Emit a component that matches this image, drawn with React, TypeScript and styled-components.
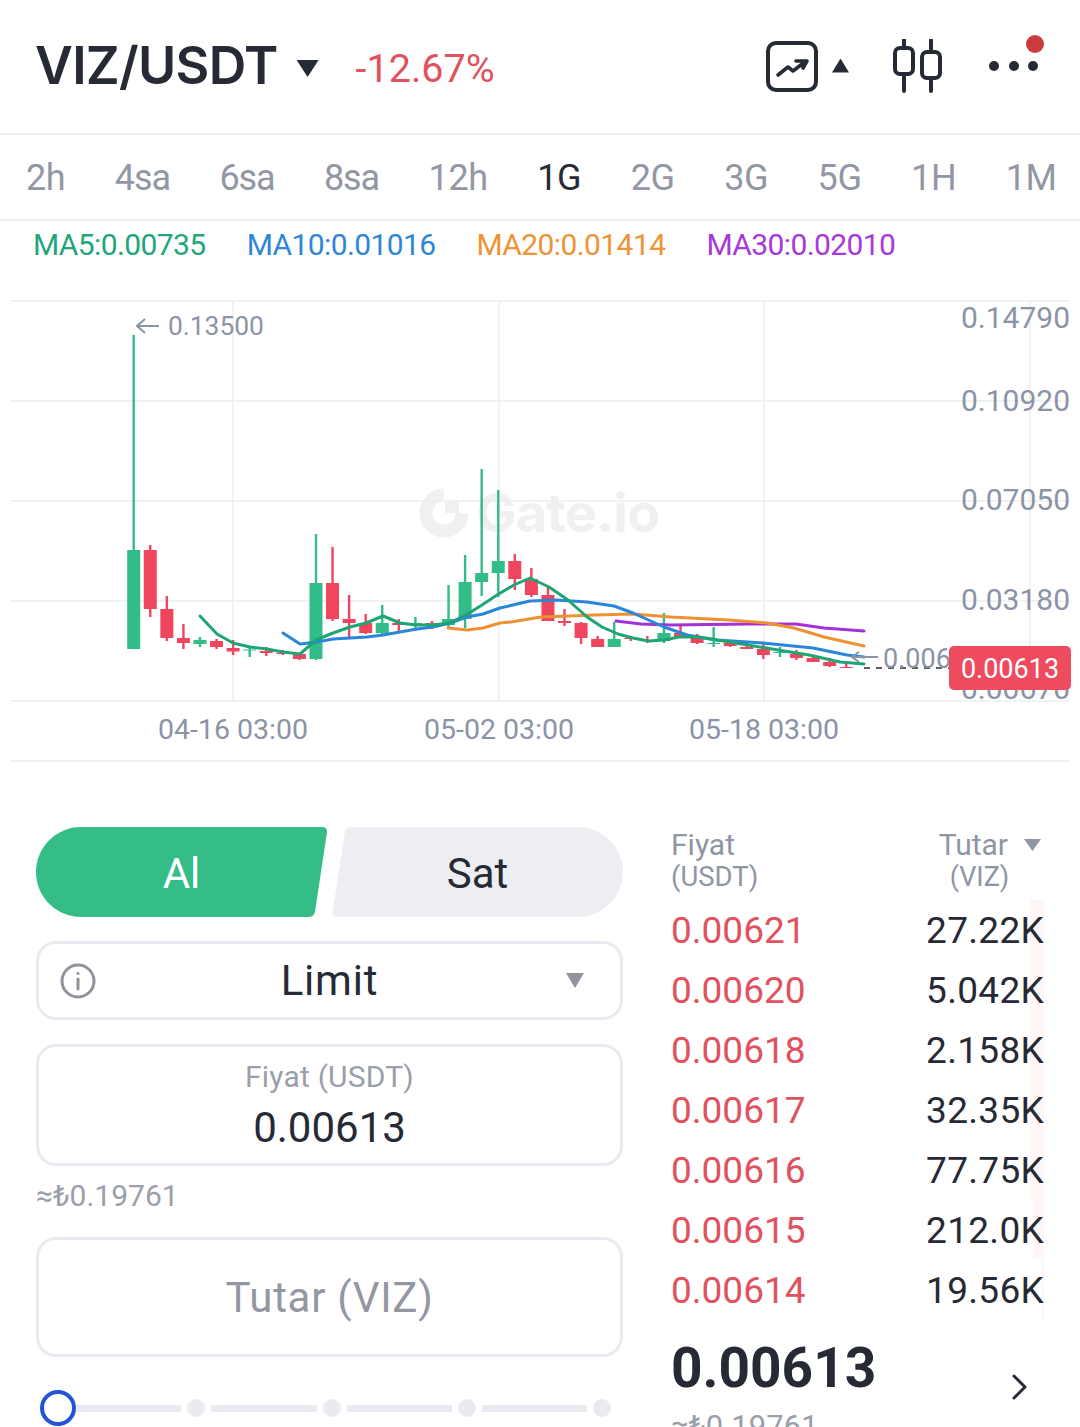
import styled, { createGlobalStyle } from "styled-components";

const GlobalStyle = createGlobalStyle`
  html, body {
    margin: 0;
    padding: 0;
    background: #fff;
    height: 1427px;
    overflow: hidden;
  }
  * {
    box-sizing: border-box;
  }
  #root {
    font-family: Roboto, "Liberation Sans", sans-serif;
    color: #262a35;
  }
`;

const Page = styled.div`
  width: 1080px;
  height: 1427px;
  overflow: hidden;
  position: relative;
`;

const Header = styled.header`
  height: 135px;
  display: flex;
  align-items: center;
  padding: 0 35px 2px 35px;
  border-bottom: 2px solid #eef0f3;
`;

const Pair = styled.h1`
  margin: 0;
  font-family: Inter, sans-serif;
  font-size: 52px;
  line-height: 60px;
  font-weight: 600;
  letter-spacing: -0.7px;
`;

const Caret = styled.span<{ $up?: boolean; $color?: string; $w: number; $h: number }>`
  display: block;
  flex: none;
  width: ${(p) => p.$w}px;
  height: ${(p) => p.$h}px;
  background: ${(p) => p.$color ?? "#262a35"};
  clip-path: ${(p) => (p.$up ? "polygon(50% 0, 100% 100%, 0 100%)" : "polygon(0 0, 100% 0, 50% 100%)")};
`;

const PairCaret = styled(Caret)`
  margin: 6px 0 0 19px;
`;

const Change = styled.span`
  margin: 6px 0 0 37px;
  font-size: 39.5px;
  color: #e0525f;
`;

const HeaderIcons = styled.div`
  margin-left: auto;
  display: flex;
  align-items: center;
`;

const ChartIcon = styled.svg`
  display: block;
  margin-top: 2px;
`;

const ChartCaret = styled(Caret)`
  margin: 0 0 0 14px;
`;

const CandleIcon = styled.svg`
  margin-left: 44px;
  display: block;
`;

const MoreIcon = styled.svg`
  margin-left: 44px;
  display: block;
`;

const Periods = styled.nav`
  height: 86px;
  display: flex;
  align-items: center;
  gap: 49.5px;
  padding: 2px 0 0 26px;
  border-bottom: 2px solid #eef0f3;
`;

const Period = styled.span<{ $active?: boolean; $tight?: boolean }>`
  font-size: 36px;
  letter-spacing: ${(p) => (p.$tight ? "-1.1px" : "-0.4px")};
  color: ${(p) => (p.$active ? "#262a35" : "#9297a3")};
`;

const Legend = styled.div`
  height: 47px;
  display: flex;
  align-items: center;
  gap: 41px;
  padding: 0 0 0 33px;
`;

const LegendItem = styled.span<{ $color: string }>`
  font-size: 30px;
  letter-spacing: -0.6px;
  color: ${(p) => p.$color};
`;

const ChartSvg = styled.svg`
  display: block;
  width: 1080px;
  height: 494px;
`;

const AxisText = styled.text<{ $size?: number }>`
  font-family: Roboto, sans-serif;
  font-size: ${(p) => p.$size ?? 30}px;
  fill: #8b93a6;
`;

const Trade = styled.section`
  display: flex;
  padding: 65px 36px 0;
  gap: 48px;
`;

const OrderForm = styled.div`
  width: 587px;
  flex: none;
  display: flex;
  flex-direction: column;
`;

const SideToggle = styled.div`
  display: grid;
  grid-template-columns: 291px 291px;
  gap: 5px;
`;

const SideButton = styled.div<{ $buy?: boolean }>`
  height: 90px;
  display: flex;
  align-items: center;
  justify-content: center;
  font-size: 42px;
  padding-top: 2px;
  background: ${(p) => (p.$buy ? "#35bd88" : "#edeef2")};
  color: ${(p) => (p.$buy ? "#fff" : "#262a35")};
  clip-path: ${(p) =>
    p.$buy
      ? `path("M45 0 H286 Q291.5 0 291 5 L279 85 Q278 90 272 90 H45 A45 45 0 0 1 45 0 Z")`
      : `path("M19 0 H246 A45 45 0 0 1 246 90 H5 Q0 90 0.5 85 L13 5 Q14 0 19 0 Z")`};
`;

const Field = styled.div<{ $height: number }>`
  height: ${(p) => p.$height}px;
  border: 3px solid #e9ebf0;
  border-radius: 20px;
`;

const LimitField = styled(Field)`
  margin-top: 24px;
  display: grid;
  grid-template-columns: 1fr auto 1fr;
  align-items: center;
  padding: 0 21px;
`;

const InfoIcon = styled.svg`
  display: block;
`;

const LimitLabel = styled.span`
  font-size: 42px;
  letter-spacing: 0.8px;
`;

const LimitCaret = styled(Caret)`
  justify-self: end;
  margin-right: 15px;
`;

const PriceField = styled(Field)`
  margin-top: 24px;
  display: flex;
  flex-direction: column;
  align-items: center;
  padding-top: 12px;
`;

const FieldHint = styled.span`
  font-size: 30px;
  line-height: 36px;
  letter-spacing: 0.2px;
  color: #9a9fa9;
`;

const FieldValue = styled.span`
  font-size: 42px;
  line-height: 50px;
  margin-top: 8px;
`;

const Approx = styled.div`
  margin-top: 12px;
  height: 48px;
  font-size: 30px;
  line-height: 36px;
  color: #9a9fa9;
`;

const AmountField = styled(Field)`
  margin-top: 11px;
  display: flex;
  align-items: center;
  justify-content: center;
  font-size: 42px;
  color: #9297a1;
  letter-spacing: 0.7px;
`;

const Slider = styled.div`
  margin: 33px 12px 0 4px;
  display: flex;
  align-items: center;
  gap: 6px;
`;

const Thumb = styled.span`
  flex: none;
  width: 36px;
  height: 36px;
  margin-right: -6px;
  border: 4px solid #2354d8;
  border-radius: 50%;
`;

const Track = styled.span`
  flex: 1;
  height: 7px;
  background: #e9ebf1;
`;

const Stop = styled.span`
  flex: none;
  width: 18px;
  height: 18px;
  border-radius: 50%;
  background: #e9ebf1;
`;

const Book = styled.div`
  flex: 1;
  display: flex;
  flex-direction: column;
`;

const BookHead = styled.div`
  display: flex;
  justify-content: space-between;
  height: 71px;
  font-size: 30px;
  line-height: 32px;
  color: #8f96a3;
  margin-top: 2px;
  padding-right: 3px;
`;

const HeadCol = styled.div`
  display: flex;
  flex-direction: column;
`;

const HeadTop = styled.span`
  display: flex;
  align-items: center;
  gap: 16px;
`;

const HeadSub = styled.span`
  font-size: 27px;
  padding-left: 11px;
`;

const HeadPriceSub = styled.span`
  font-size: 27.5px;
`;

const BookRow = styled.div`
  position: relative;
  height: 60px;
  display: flex;
  align-items: center;
  justify-content: space-between;
  font-size: 37px;
`;

const DepthBar = styled.span`
  position: absolute;
  right: 0;
  top: 0;
  bottom: 0;
  background: #fff6f6;
`;

const AskPrice = styled.span`
  color: #e0525f;
  position: relative;
`;

const AskAmount = styled.span`
  position: relative;
  letter-spacing: 0.3px;
`;

const LastRow = styled.div`
  margin-top: 13px;
  display: flex;
  align-items: flex-end;
  justify-content: space-between;
  padding-right: 16px;
`;

const LastPrice = styled.span`
  font-size: 55px;
  line-height: 70px;
  font-weight: 700;
`;

const Chevron = styled.svg`
  display: block;
  margin-bottom: 2px;
`;

const LastApprox = styled.div`
  margin-top: 6px;
  font-size: 31px;
  line-height: 36px;
  color: #9a9fa9;
`;

const periods = ["2h", "4sa", "6sa", "8sa", "12h", "1G", "2G", "3G", "5G", "1H", "1M"];

const legend = [
  { label: "MA5:0.00735", color: "#1fa67a" },
  { label: "MA10:0.01016", color: "#2e86d6" },
  { label: "MA20:0.01414", color: "#ee9436" },
  { label: "MA30:0.02010", color: "#a838d8" },
];

// body top, body bottom, wick top, wick bottom, up
const candles: [number, number, number, number, boolean][] = [
  [550, 649, 335, 649, true],
  [550, 609, 545, 617, false],
  [609, 638, 596, 641, false],
  [638, 643, 624, 649, false],
  [640, 644, 637, 647, true],
  [641, 647, 639, 649, false],
  [648, 651.5, 640, 655, false],
  [649.5, 650.5, 647, 657, true],
  [651, 653, 647, 656, false],
  [653, 654, 650, 655, false],
  [654, 659, 653, 660, false],
  [583, 659, 534, 660, true],
  [583, 619, 547, 621, false],
  [619, 623, 595, 638, false],
  [623, 633, 614, 634, false],
  [623, 633, 605, 634, true],
  [623, 625, 619, 633, false],
  [623, 624, 617, 631, true],
  [623, 625, 621, 629, false],
  [619, 625, 585, 628, true],
  [582, 619, 555, 628, true],
  [573, 582, 469, 596, true],
  [561, 573, 490, 597, true],
  [561, 579, 554, 590, false],
  [579, 595, 568, 597, false],
  [595, 621, 587, 621, false],
  [621, 623, 609, 626, false],
  [623, 638, 622, 644, false],
  [639, 647, 636, 647, false],
  [639, 647, 622, 647, true],
  [638, 639, 636, 641, false],
  [640, 641, 636, 643, false],
  [633, 641, 613, 643, true],
  [633, 637, 624, 637, false],
  [637, 643, 634, 644, false],
  [643, 644, 627, 647, true],
  [643, 646, 640, 647, false],
  [647, 649, 642, 649, false],
  [649, 655, 643, 659, false],
  [652, 653, 647, 657, true],
  [654, 658, 650, 660, false],
  [658, 662, 655, 662, false],
  [662, 666, 658, 667, false],
  [667, 668, 662, 668, false],
];

const maLines = [
  {
    color: "#a431d6",
    points:
      "616,621 641,624 671,625 748,624 796,624 824,628 864,631",
  },
  {
    color: "#ee9132",
    points:
      "448,628 467,630 483,628 500,623 511,622 541,617 595,615 633,614 671,617 729,620 767,623 794,628 824,637 864,646",
  },
  {
    color: "#2a86d9",
    points:
      "283,633 300,644 317,642 333,639 367,637 383,635 400,632 417,629 433,627 450,623 467,617 483,614 500,608 530,601 556,600 587,602 614,606 633,613 664,627 687,635 717,640 763,643 813,648 847,655 864,657",
  },
  {
    color: "#1fa474",
    points:
      "200,616 217,634 233,643 250,647 267,649 283,652 300,654 316,640 333,633 350,627 366,623 383,616 400,623 416,625 433,625 449,623 466,615 482,605 497,595 514,585 530,578 549,587 568,600 587,617 602,627 618,634 633,638 648,641 664,640 679,637 698,637 717,640 748,645 778,650 809,655 840,662 864,664",
  },
];

const gridY = [301, 401, 501, 601, 701];
const gridX = [233, 499, 764, 1030];

const axisLabels = [
  { text: "0.14790", y: 328 },
  { text: "0.10920", y: 411 },
  { text: "0.07050", y: 510 },
  { text: "0.03180", y: 610 },
  { text: "0.00670", y: 699 },
];

const timeLabels = [
  { text: "04-16 03:00", x: 233 },
  { text: "05-02 03:00", x: 499 },
  { text: "05-18 03:00", x: 764 },
];

const asks = [
  { price: "0.00621", amount: "27.22K", depth: 14 },
  { price: "0.00620", amount: "5.042K", depth: 14 },
  { price: "0.00618", amount: "2.158K", depth: 14 },
  { price: "0.00617", amount: "32.35K", depth: 14 },
  { price: "0.00616", amount: "77.75K", depth: 14 },
  { price: "0.00615", amount: "212.0K", depth: 11 },
  { price: "0.00614", amount: "19.56K", depth: 3 },
];

const Chart = () => (
  <ChartSvg viewBox="0 268 1080 494">
    {/* watermark */}
    <g fill="none" stroke="#f0f0f0" strokeWidth="13">
      <path d="M462 513 A18 18 0 1 1 444 495" />
    </g>
    <rect x="445" y="501" width="14" height="12" fill="#f0f0f0" />
    <text x="476" y="532" fontFamily="Inter, sans-serif" fontWeight="700" fontSize="54" fill="#f0f0f0" letterSpacing="-0.8">
      Gate.io
    </text>

    {gridY.map((y) => (
      <line key={y} x1="10" x2="1070" y1={y} y2={y} stroke="#eceef1" strokeWidth="1.5" />
    ))}
    {gridX.map((x) => (
      <line key={x} x1={x} x2={x} y1="301" y2="701" stroke="#eceef1" strokeWidth="1.5" />
    ))}
    <line x1="10" x2="1070" y1="761" y2="761" stroke="#eceef1" strokeWidth="1.5" />

    {candles.map(([top, bottom, wickTop, wickBottom, up], i) => {
      const x = 133.7 + i * 16.57;
      const color = up ? "#32bc87" : "#f0465d";
      return (
        <g key={i} fill={color}>
          <rect x={x - 1.2} y={wickTop} width="2.4" height={wickBottom - wickTop} />
          <rect x={x - 6.5} y={top} width="13" height={bottom - top} />
        </g>
      );
    })}

    {maLines.map((line) => (
      <polyline
        key={line.color}
        points={line.points}
        fill="none"
        stroke={line.color}
        strokeWidth="3"
        strokeLinejoin="round"
        strokeLinecap="round"
      />
    ))}

    <path d="M159 326 H137 M145 319 L137 326 L145 333" fill="none" stroke="#8b93a6" strokeWidth="2" />
    <AxisText $size={26.4} x="168" y="335">
      0.13500
    </AxisText>

    {axisLabels.map((label) => (
      <AxisText key={label.text} x="1070" y={label.y} textAnchor="end">
        {label.text}
      </AxisText>
    ))}
    {timeLabels.map((label) => (
      <AxisText key={label.text} $size={28.5} x={label.x} y="739" textAnchor="middle">
        {label.text}
      </AxisText>
    ))}

    <line x1="864" x2="949" y1="668" y2="668" stroke="#262a35" strokeWidth="1.5" strokeDasharray="6 6" />
    <path d="M878 657 H852 M859 652 L852 657 L859 662" fill="none" stroke="#8b93a6" strokeWidth="2" />
    <AxisText $size={27} x="883" y="668">
      0.00613
    </AxisText>
    <rect x="949" y="646" width="122" height="44" rx="5" fill="#ee4b5f" />
    <text x="1010" y="678" textAnchor="middle" fontFamily="Roboto, sans-serif" fontSize="27" fill="#fff">
      0.00613
    </text>
  </ChartSvg>
);

const App = () => {
  return (
    <Page>
      <GlobalStyle />
      <Header>
        <Pair>VIZ/USDT</Pair>
        <PairCaret $w={22} $h={17} />
        <Change>-12.67%</Change>
        <HeaderIcons>
          <ChartIcon width="52" height="52" viewBox="0 0 52 52" fill="none" stroke="#262a35">
            <rect x="2" y="2" width="48" height="47" rx="8" strokeWidth="4" />
            <path
              d="M12 34 L22 26 L27 30 L40 20 M30 20 H41 L37 27"
              strokeWidth="3.6"
              strokeLinecap="round"
              strokeLinejoin="round"
            />
          </ChartIcon>
          <ChartCaret $up $w={17} $h={14} />
          <CandleIcon width="52" height="54" viewBox="0 0 52 54" fill="none" stroke="#262a35" strokeWidth="4">
            <path d="M11 1 V52 M38 1 V52" strokeLinecap="round" />
            <rect x="2" y="9" width="18" height="26" rx="5" fill="#fff" />
            <rect x="29" y="13" width="18" height="26" rx="5" fill="#fff" />
          </CandleIcon>
          <MoreIcon width="56" height="72" viewBox="0 0 56 72">
            <g fill="#262a35">
              <circle cx="5" cy="36" r="5" />
              <circle cx="25" cy="36" r="5" />
              <circle cx="44" cy="36" r="5" />
            </g>
            <circle cx="46" cy="14" r="9" fill="#cc3b3b" />
          </MoreIcon>
        </HeaderIcons>
      </Header>

      <Periods>
        {periods.map((p) => (
          <Period key={p} $active={p === "1G"} $tight={p.endsWith("sa")}>
            {p}
          </Period>
        ))}
      </Periods>

      <Legend>
        {legend.map((item) => (
          <LegendItem key={item.label} $color={item.color}>
            {item.label}
          </LegendItem>
        ))}
      </Legend>

      <Chart />

      <Trade>
        <OrderForm>
          <SideToggle>
            <SideButton $buy>Al</SideButton>
            <SideButton>Sat</SideButton>
          </SideToggle>
          <LimitField $height={79}>
            <InfoIcon width="36" height="36" viewBox="0 0 36 36" fill="none" stroke="#8f949c" strokeWidth="3">
              <circle cx="18" cy="18" r="16" />
              <path d="M18 16 V26" strokeLinecap="round" />
              <circle cx="18" cy="10.5" r="1.5" fill="#8f949c" stroke="none" />
            </InfoIcon>
            <LimitLabel>Limit</LimitLabel>
            <LimitCaret $color="#8f949c" $w={18} $h={15} />
          </LimitField>
          <PriceField $height={122}>
            <FieldHint>Fiyat (USDT)</FieldHint>
            <FieldValue>0.00613</FieldValue>
          </PriceField>
          <Approx>≈₺0.19761</Approx>
          <AmountField $height={120}>Tutar (VIZ)</AmountField>
          <Slider>
            <Thumb />
            <Track />
            <Stop />
            <Track />
            <Stop />
            <Track />
            <Stop />
            <Track />
            <Stop />
          </Slider>
        </OrderForm>

        <Book>
          <BookHead>
            <HeadCol>
              <span>Fiyat</span>
              <HeadPriceSub>(USDT)</HeadPriceSub>
            </HeadCol>
            <HeadCol>
              <HeadTop>
                Tutar
                <Caret $color="#8f96a3" $w={17} $h={12} />
              </HeadTop>
              <HeadSub>(VIZ)</HeadSub>
            </HeadCol>
          </BookHead>
          {asks.map((row) => (
            <BookRow key={row.price}>
              <DepthBar style={{ width: row.depth }} />
              <AskPrice>{row.price}</AskPrice>
              <AskAmount>{row.amount}</AskAmount>
            </BookRow>
          ))}
          <LastRow>
            <LastPrice>0.00613</LastPrice>
            <Chevron width="16" height="28" viewBox="0 0 16 28" fill="none" stroke="#262a35" strokeWidth="3">
              <path d="M2 3 L13 14 L2 25" strokeLinecap="round" strokeLinejoin="round" />
            </Chevron>
          </LastRow>
          <LastApprox>≈₺0.19761</LastApprox>
        </Book>
      </Trade>
    </Page>
  );
};

export default App;
